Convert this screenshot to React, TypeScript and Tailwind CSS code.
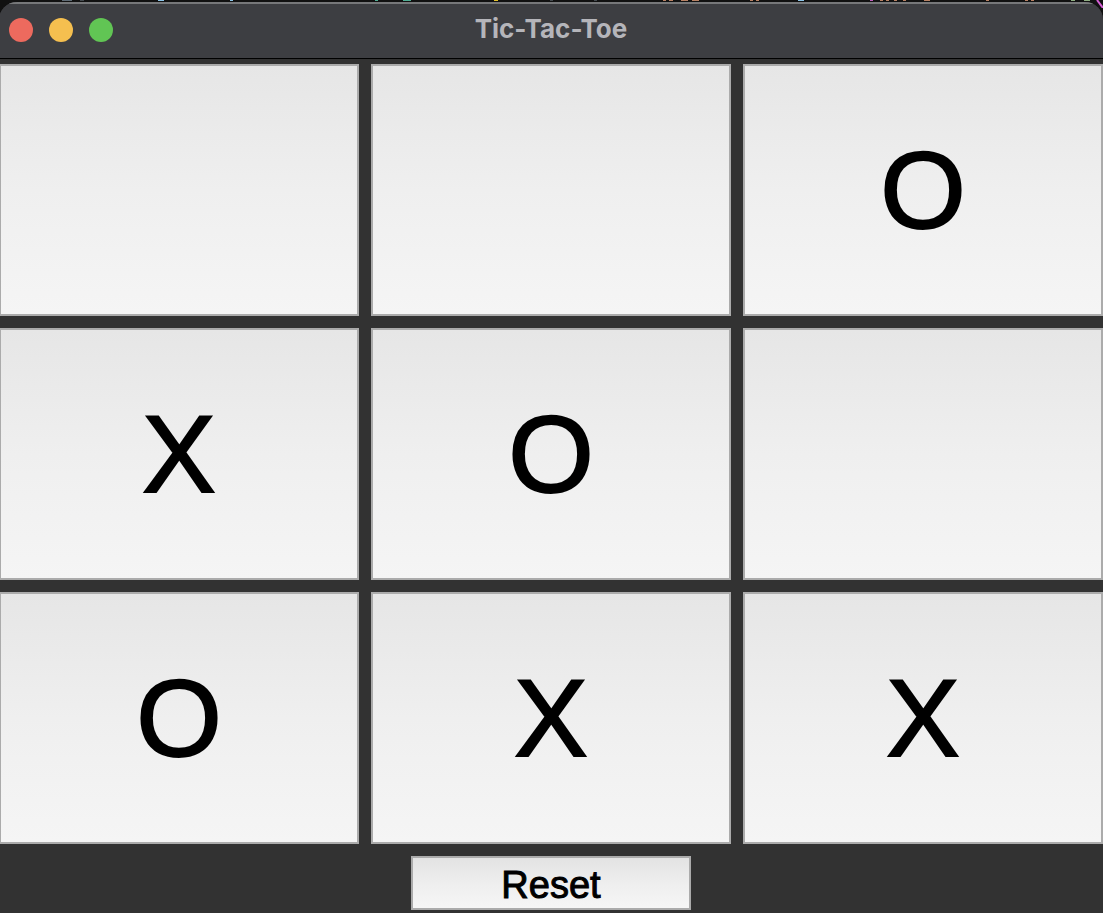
const board = ["", "", "O", "X", "O", "", "O", "X", "X"];

const specks = [
  "left-[62px] w-[10px] bg-[#5f6b75]",
  "left-[80px] w-[4px] bg-[#444a4f]",
  "left-[158px] w-[6px] bg-[#8cc4e8]",
  "left-[230px] w-[3px] bg-[#8cc4e8]",
  "left-[375px] w-[3px] bg-[#4fae94]",
  "left-[403px] w-[8px] bg-[#4fae94]",
  "left-[494px] w-[4px] bg-[#e6c229]",
  "left-[550px] w-[3px] bg-[#444a4f]",
  "left-[594px] w-[3px] bg-[#444a4f]",
  "left-[663px] w-[3px] bg-[#b98264]",
  "left-[669px] w-[4px] bg-[#b98264]",
  "left-[681px] w-[7px] bg-[#b98264]",
  "left-[692px] w-[7px] bg-[#b98264]",
  "left-[750px] w-[3px] bg-[#b98264]",
  "left-[756px] w-[3px] bg-[#b98264]",
  "left-[798px] w-[6px] bg-[#8cc4e8]",
  "left-[870px] w-[3px] bg-[#c05ec0]",
  "left-[880px] w-[3px] bg-[#b98264]",
  "left-[886px] w-[3px] bg-[#b98264]",
  "left-[894px] w-[3px] bg-[#b98264]",
  "left-[903px] w-[3px] bg-[#b98264]",
  "left-[924px] w-[6px] bg-[#b98264]",
  "left-[986px] w-[3px] bg-[#b98264]",
  "left-[1025px] w-[3px] bg-[#b98264]",
  "left-[1031px] w-[3px] bg-[#b98264]",
  "left-[1071px] w-[4px] bg-[#8fae82]",
  "left-[1084px] w-[6px] bg-[#8fae82]",
];

export default function App() {
  return (
    <main className="relative flex min-h-screen flex-col overflow-hidden bg-[#111111] pt-[2px] font-['Liberation_Sans',Arial,sans-serif]">
      <div aria-hidden="true">
        {specks.map((s) => (
          <span key={s} className={`absolute top-0 h-px ${s}`} />
        ))}
        <svg className="absolute top-0 right-0" width="7" height="8" viewBox="0 0 7 8">
          <path d="M1 0 L7 8" stroke="#d65fd6" strokeWidth="2" />
        </svg>
      </div>
      <section className="relative -ml-px flex grow flex-col overflow-hidden rounded-t-[18px] bg-[#323232]">
        <header className="grid h-[57px] shrink-0 grid-cols-[1fr_auto_1fr] items-center border-t-2 border-b border-t-[#77787a] border-b-black bg-[#3d3e42] px-[10px] pb-[2px]">
          <div className="flex gap-4">
            <button aria-label="Close" className="size-6 rounded-full bg-[#ed6a5e]" />
            <button aria-label="Minimize" className="size-6 rounded-full bg-[#f5bf4f]" />
            <button aria-label="Zoom" className="size-6 rounded-full bg-[#61c554]" />
          </div>
          <h1 className="pb-[2px] font-[Inter,sans-serif] text-[26px] leading-8 font-bold text-[#b5b5ba]">Tic-Tac-Toe</h1>
        </header>
        <div className="mt-[5px] grid grow grid-cols-3 grid-rows-3 gap-3">
          {board.map((mark, i) => (
            <button
              key={i}
              aria-label={mark ? undefined : `Empty cell ${i + 1}`}
              className="min-h-20 border-2 border-[#ababab] bg-linear-to-b from-[#e6e6e6] via-[#efefef] to-[#f5f5f5] text-[110px] leading-none text-black [-webkit-text-stroke:2px_black]"
            >
              {mark}
            </button>
          ))}
        </div>
        <footer className="flex justify-center pt-3 pb-[3px]">
          <button className="h-[54px] w-[280px] border-2 border-[#ababab] bg-linear-to-b from-[#e3e3e3] via-[#eeeeee] to-[#f6f6f6] pt-1 text-[38px] leading-none text-black [-webkit-text-stroke:1px_black]">
            Reset
          </button>
        </footer>
      </section>
    </main>
  );
}
